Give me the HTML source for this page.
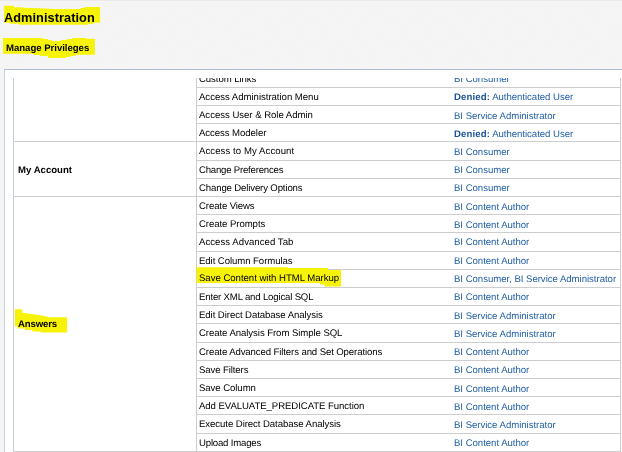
<!DOCTYPE html>
<html><head><meta charset="utf-8"><title>Administration</title>
<style>
html,body{margin:0;padding:0}
html{background:#f4f4f4}
body{width:622px;height:452px;overflow:hidden;position:relative;background:#f4f4f4;font-family:"Liberation Sans",Arial,sans-serif;font-size:9.45px;color:#111}
.abs{position:absolute}
h1{position:absolute;will-change:transform;margin:0;left:4.4px;top:9.8px;font-size:12.75px;letter-spacing:0.06px;font-weight:bold;line-height:16px;color:#000;white-space:nowrap}
h2{position:absolute;will-change:transform;margin:0;left:6.0px;top:42.6px;font-size:9.6px;letter-spacing:-0.03px;text-rendering:geometricPrecision;font-weight:bold;line-height:12px;color:#000;white-space:nowrap}
#panel{position:absolute;left:4px;top:69px;width:620px;height:400px;background:#fff;border-left:1px solid #c6d3e4;border-top:1px solid #adbccf}
#clip{position:absolute;left:13px;top:77.5px;width:609px;height:375px;overflow:hidden}
.hl{position:absolute;height:1px;background:#cdcdcd}
.vl{position:absolute;width:1px;background:#cccccc}
.t{position:absolute;will-change:transform;white-space:nowrap;line-height:12px;height:12px;font-size:9.6px;letter-spacing:-0.07px;text-rendering:geometricPrecision}
.c2{left:199.0px;color:#000}
.c3{left:453.9px;color:#205fa6;letter-spacing:-0.03px}
.c3 b{color:#1c559b;letter-spacing:0.12px}
.c1{left:18px;font-weight:bold;color:#000;letter-spacing:0}
svg{position:absolute;left:0;top:0}
</style></head><body>
<svg width="622" height="452" viewBox="0 0 622 452">
<defs><pattern id="chk" width="3.46" height="3.46" patternUnits="userSpaceOnUse"><rect width="3.46" height="3.46" fill="#f3f3f3"/><rect width="1.73" height="1.73" fill="#f6f6f6"/><rect x="1.73" y="1.73" width="1.73" height="1.73" fill="#f6f6f6"/></pattern></defs>
<rect width="622" height="452" fill="url(#chk)"/>
<polygon fill="#f7f308" points="4,5.85 13.9,5.85 13.9,7.2 22.7,7.2 22.7,7.8 40,8.2 55,8.9 80.2,9 80.2,8 84.4,8 84.4,6.9 100.1,6.9 100.1,22.8 93.2,22.8 93.2,23.9 88.1,23.9 88.1,24.8 19,24.8 19,23.75 10,23.75 10,22.65 4,22.65"/>
<polygon fill="#f7f308" points="3,38 42.9,38 42.9,39.1 48,39.1 48,40.1 52,40.1 52,40.9 60.6,40.9 60.6,40.1 66.9,40.1 66.9,39.1 72.4,39.1 72.4,38 85.8,38 85.8,38.8 94.9,38.8 94.9,54.8 75.3,54.8 75.3,55.9 70.3,55.9 70.3,56.9 66,56.9 66,57.9 48,57.9 48,56.05 40,56.05 40,55 33.6,55 33.6,53.8 3,53.8"/>
</svg>
<h1>Administration</h1>
<h2>Manage Privileges</h2>
<div id="panel"></div>
<div style="position:absolute;left:0;top:0;width:622px;height:1px;background:#ebebeb"></div>

<div class="vl" style="left:13px;top:77.5px;height:374.50px"></div>
<div class="vl" style="left:196px;top:77.5px;height:374.50px"></div>
<div class="vl" style="left:620px;top:77.5px;height:374.50px"></div>
<div class="hl" style="left:196px;top:87.00px;width:425px"></div>
<div class="hl" style="left:196px;top:105.00px;width:425px"></div>
<div class="hl" style="left:196px;top:123.00px;width:425px"></div>
<div class="hl" style="left:13px;top:141.00px;width:608px"></div>
<div class="hl" style="left:196px;top:160.00px;width:425px"></div>
<div class="hl" style="left:196px;top:178.00px;width:425px"></div>
<div class="hl" style="left:13px;top:196.00px;width:608px"></div>
<div class="hl" style="left:196px;top:214.00px;width:425px"></div>
<div class="hl" style="left:196px;top:232.00px;width:425px"></div>
<div class="hl" style="left:196px;top:251.00px;width:425px"></div>
<div class="hl" style="left:196px;top:269.00px;width:425px"></div>
<div class="hl" style="left:196px;top:287.00px;width:425px"></div>
<div class="hl" style="left:196px;top:305.00px;width:425px"></div>
<div class="hl" style="left:196px;top:323.00px;width:425px"></div>
<div class="hl" style="left:196px;top:342.00px;width:425px"></div>
<div class="hl" style="left:196px;top:360.00px;width:425px"></div>
<div class="hl" style="left:196px;top:378.00px;width:425px"></div>
<div class="hl" style="left:196px;top:396.00px;width:425px"></div>
<div class="hl" style="left:196px;top:414.00px;width:425px"></div>
<div class="hl" style="left:196px;top:433.00px;width:425px"></div>
<div class="hl" style="left:13px;top:451.00px;width:608px"></div>
<svg width="622" height="452" viewBox="0 0 622 452"><polygon fill="#f7f308" points="196.5,267.2 287.5,267.2 287.5,268.1 328,268.1 328,269.9 341.1,269.9 341.1,286.4 324.6,286.4 324.6,284.6 320,284.6 320,283 196.5,283"/><polygon fill="#f7f308" points="14.9,309.2 22.3,309.2 22.3,312.8 28,313.6 35,314.6 44.6,315.9 49.3,317.2 67.1,317.2 67.1,332.4 40.5,332.4 40.5,331.4 32.4,331.4 32.4,330 25,330 25,328.4 17.6,328.4 17.6,326.6 14.9,326.6"/></svg>
<div id="clip">
<div class="t c2" style="left:186.0px;top:-3.50px">Custom Links</div>
<div class="t c3" style="left:440.9px;top:-3.50px">BI Consumer</div>
</div>
<div class="t c2" style="top:92px;letter-spacing:-0.03px">Access Administration Menu</div>
<div class="t c3" style="top:92px"><b>Denied:</b> Authenticated User</div>
<div class="t c2" style="top:110px;letter-spacing:-0.03px">Access User &amp; Role Admin</div>
<div class="t c3" style="top:111px">BI Service Administrator</div>
<div class="t c2" style="top:128px;letter-spacing:-0.07px">Access Modeler</div>
<div class="t c3" style="top:129px"><b>Denied:</b> Authenticated User</div>
<div class="t c2" style="top:146px;letter-spacing:0.07px">Access to My Account</div>
<div class="t c3" style="top:147px">BI Consumer</div>
<div class="t c2" style="top:165px;letter-spacing:-0.21px">Change Preferences</div>
<div class="t c3" style="top:165px">BI Consumer</div>
<div class="t c2" style="top:183px;letter-spacing:-0.14px">Change Delivery Options</div>
<div class="t c3" style="top:183px">BI Consumer</div>
<div class="t c2" style="top:201px;letter-spacing:-0.11px">Create Views</div>
<div class="t c3" style="top:202px">BI Content Author</div>
<div class="t c2" style="top:219px;letter-spacing:-0.07px">Create Prompts</div>
<div class="t c3" style="top:220px">BI Content Author</div>
<div class="t c2" style="top:237px;letter-spacing:0.04px">Access Advanced Tab</div>
<div class="t c3" style="top:237px">BI Content Author</div>
<div class="t c2" style="top:256px;letter-spacing:-0.07px">Edit Column Formulas</div>
<div class="t c3" style="top:256px">BI Content Author</div>
<div class="t c2" style="top:273px;letter-spacing:-0.03px">Save Content with HTML Markup</div>
<div class="t c3" style="top:274px">BI Consumer, BI Service Administrator</div>
<div class="t c2" style="top:292px;letter-spacing:-0.17px">Enter XML and Logical SQL</div>
<div class="t c3" style="top:292px">BI Content Author</div>
<div class="t c2" style="top:310px;letter-spacing:-0.07px">Edit Direct Database Analysis</div>
<div class="t c3" style="top:311px">BI Service Administrator</div>
<div class="t c2" style="top:328px;letter-spacing:-0.07px">Create Analysis From Simple SQL</div>
<div class="t c3" style="top:329px">BI Service Administrator</div>
<div class="t c2" style="top:347px;letter-spacing:-0.11px">Create Advanced Filters and Set Operations</div>
<div class="t c3" style="top:347px">BI Content Author</div>
<div class="t c2" style="top:365px;letter-spacing:-0.11px">Save Filters</div>
<div class="t c3" style="top:365px">BI Content Author</div>
<div class="t c2" style="top:383px;letter-spacing:-0.07px">Save Column</div>
<div class="t c3" style="top:384px">BI Content Author</div>
<div class="t c2" style="top:401px;letter-spacing:-0.07px">Add EVALUATE_PREDICATE Function</div>
<div class="t c3" style="top:402px">BI Content Author</div>
<div class="t c2" style="top:419px;letter-spacing:-0.07px">Execute Direct Database Analysis</div>
<div class="t c3" style="top:420px">BI Service Administrator</div>
<div class="t c2" style="top:438px;letter-spacing:-0.19px">Upload Images</div>
<div class="t c3" style="top:438px">BI Content Author</div>
<div class="t c1" style="top:164.90px">My Account</div>
<div class="t c1" style="top:318.95px;letter-spacing:-0.15px">Answers</div>
</body></html>
